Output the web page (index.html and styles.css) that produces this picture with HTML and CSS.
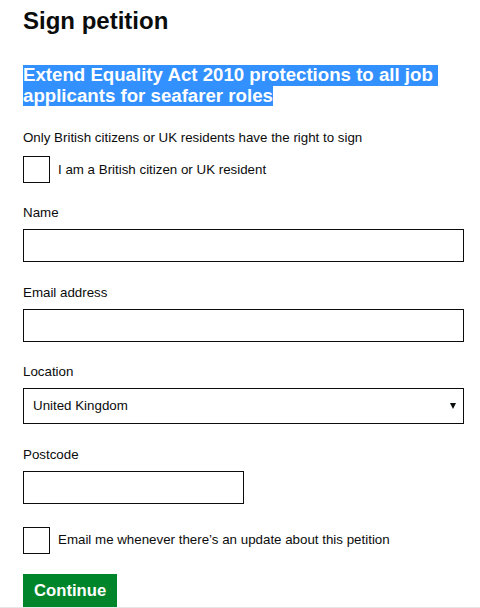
FILE: index.html
```html
<!DOCTYPE html>
<html lang="en">
<head>
  <meta charset="UTF-8">
  <meta name="viewport" content="width=device-width, initial-scale=1.0">
  <title>Sign petition</title>
  <link rel="stylesheet" href="styles.css">
</head>
<body>
  <main class="page">
    <h1>Sign petition</h1>

    <h2 class="petition-title">
      <span class="hl">Extend Equality Act 2010 protections to all job&nbsp;</span>
      <span class="hl">applicants for seafarer roles</span>
    </h2>

    <form class="sign-form">
      <p class="hint">Only British citizens or UK residents have the right to sign</p>
      <label class="check-row check-first">
        <input type="checkbox" class="box">
        <span>I am a British citizen or UK resident</span>
      </label>

      <div class="field field-first">
        <label for="name">Name</label>
        <input id="name" type="text" class="text-input">
      </div>

      <div class="field">
        <label for="email">Email address</label>
        <input id="email" type="email" class="text-input">
      </div>

      <div class="field">
        <label for="location">Location</label>
        <div class="select-wrap">
          <select id="location" class="select">
            <option>United Kingdom</option>
          </select>
        </div>
      </div>

      <div class="field">
        <label for="postcode">Postcode</label>
        <input id="postcode" type="text" class="text-input short">
      </div>

      <label class="check-row check-last">
        <input type="checkbox" class="box">
        <span>Email me whenever there’s an update about this petition</span>
      </label>

      <button type="button" class="button">Continue</button>
    </form>
  </main>
  <div class="rule"></div>
</body>
</html>
```

FILE: styles.css
```css
body {
  margin: 0;
  font-family: "Liberation Sans", Arial, sans-serif;
  color: #0b0c0c;
  background: #fff;
}
.page {
  padding: 0 16px 0 23px;
}
h1 {
  font-size: 24px;
  line-height: 28px;
  margin: 7px 0 0;
}
.petition-title {
  font-size: 18.667px;
  line-height: 20.5px;
  margin: 30px 0 0;
}
.hl {
  display: block;
  width: fit-content;
  background: #3390ff;
  color: #fff;
  white-space: pre;
}
.sign-form {
  font-size: 13.333px;
  line-height: 16px;
}
.hint {
  margin: 24px 0 0;
}
.check-row {
  display: flex;
  align-items: center;
  gap: 8px;
}
.check-first {
  margin-top: 10px;
}
.check-last {
  margin-top: 23px;
}
.box {
  appearance: none;
  margin: 0;
  width: 27px;
  height: 27px;
  border: 1px solid #0b0c0c;
  background: #fff;
}
.field {
  margin-top: 22.5px;
}
.field-first {
  margin-top: 22px;
}
.field label {
  display: block;
  margin-bottom: 8px;
}
.text-input {
  display: block;
  box-sizing: border-box;
  width: 100%;
  height: 33px;
  margin: 0;
  border: 1px solid #0b0c0c;
  border-radius: 0;
  font: inherit;
}
.text-input.short {
  width: 221px;
}
.select-wrap {
  position: relative;
}
.select-wrap::after {
  content: "";
  position: absolute;
  right: 8px;
  top: 15px;
  border-left: 3px solid transparent;
  border-right: 3px solid transparent;
  border-top: 6px solid #0b0c0c;
}
.select {
  display: block;
  box-sizing: border-box;
  width: 100%;
  height: 36px;
  margin: 0;
  padding: 0 9px;
  appearance: none;
  border: 1px solid #0b0c0c;
  border-radius: 0;
  background: #fff;
  font: inherit;
  color: #0b0c0c;
}
.button {
  display: block;
  margin-top: 20.5px;
  height: 33px;
  padding: 0 11px;
  border: none;
  border-radius: 0;
  background: #00852a;
  color: #fff;
  font-family: inherit;
  font-size: 16.667px;
  font-weight: bold;
}
.rule {
  height: 2px;
  background: #e6e6e6;
}
```
